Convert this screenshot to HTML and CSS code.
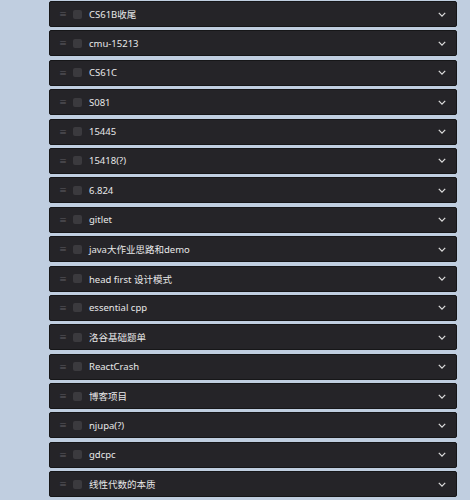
FILE: index.html
```html
<!DOCTYPE html>
<html lang="en">
<head>
    <meta charset="UTF-8">
    <meta name="viewport" content="width=device-width, initial-scale=1.0">
    <title>Todo</title>
    <link rel="stylesheet" href="styles.css">
</head>
<body>
    <ul class="list">
        <li class="item"><span class="handle">≡</span><span class="check"></span><span class="title">CS61B收尾</span><svg class="chev" viewBox="0 0 10 6"><path d="M1 1l4 4 4-4"/></svg></li>
        <li class="item"><span class="handle">≡</span><span class="check"></span><span class="title">cmu-15213</span><svg class="chev" viewBox="0 0 10 6"><path d="M1 1l4 4 4-4"/></svg></li>
        <li class="item"><span class="handle">≡</span><span class="check"></span><span class="title">CS61C</span><svg class="chev" viewBox="0 0 10 6"><path d="M1 1l4 4 4-4"/></svg></li>
        <li class="item"><span class="handle">≡</span><span class="check"></span><span class="title">S081</span><svg class="chev" viewBox="0 0 10 6"><path d="M1 1l4 4 4-4"/></svg></li>
        <li class="item"><span class="handle">≡</span><span class="check"></span><span class="title">15445</span><svg class="chev" viewBox="0 0 10 6"><path d="M1 1l4 4 4-4"/></svg></li>
        <li class="item"><span class="handle">≡</span><span class="check"></span><span class="title">15418(?)</span><svg class="chev" viewBox="0 0 10 6"><path d="M1 1l4 4 4-4"/></svg></li>
        <li class="item"><span class="handle">≡</span><span class="check"></span><span class="title">6.824</span><svg class="chev" viewBox="0 0 10 6"><path d="M1 1l4 4 4-4"/></svg></li>
        <li class="item"><span class="handle">≡</span><span class="check"></span><span class="title">gitlet</span><svg class="chev" viewBox="0 0 10 6"><path d="M1 1l4 4 4-4"/></svg></li>
        <li class="item"><span class="handle">≡</span><span class="check"></span><span class="title">java大作业思路和demo</span><svg class="chev" viewBox="0 0 10 6"><path d="M1 1l4 4 4-4"/></svg></li>
        <li class="item"><span class="handle">≡</span><span class="check"></span><span class="title">head first 设计模式</span><svg class="chev" viewBox="0 0 10 6"><path d="M1 1l4 4 4-4"/></svg></li>
        <li class="item"><span class="handle">≡</span><span class="check"></span><span class="title">essential cpp</span><svg class="chev" viewBox="0 0 10 6"><path d="M1 1l4 4 4-4"/></svg></li>
        <li class="item"><span class="handle">≡</span><span class="check"></span><span class="title">洛谷基础题单</span><svg class="chev" viewBox="0 0 10 6"><path d="M1 1l4 4 4-4"/></svg></li>
        <li class="item"><span class="handle">≡</span><span class="check"></span><span class="title">ReactCrash</span><svg class="chev" viewBox="0 0 10 6"><path d="M1 1l4 4 4-4"/></svg></li>
        <li class="item"><span class="handle">≡</span><span class="check"></span><span class="title">博客项目</span><svg class="chev" viewBox="0 0 10 6"><path d="M1 1l4 4 4-4"/></svg></li>
        <li class="item"><span class="handle">≡</span><span class="check"></span><span class="title">njupa(?)</span><svg class="chev" viewBox="0 0 10 6"><path d="M1 1l4 4 4-4"/></svg></li>
        <li class="item"><span class="handle">≡</span><span class="check"></span><span class="title">gdcpc</span><svg class="chev" viewBox="0 0 10 6"><path d="M1 1l4 4 4-4"/></svg></li>
        <li class="item"><span class="handle">≡</span><span class="check"></span><span class="title">线性代数的本质</span><svg class="chev" viewBox="0 0 10 6"><path d="M1 1l4 4 4-4"/></svg></li>
    </ul>
</body>
</html>
```

FILE: styles.css
```css
body {
    margin: 0;
    background: #c0cee0;
    font-family: "Noto Sans", "Noto Sans CJK SC", sans-serif;
    height: 500px;
    overflow: hidden;
}

.list {
    list-style: none;
    margin: 0;
    padding: 1px 0 0 49px;
    width: 408px;
    display: flex;
    flex-direction: column;
    gap: 3.4px;
}

.item {
    display: flex;
    align-items: center;
    height: 24px;
    background: #252428;
    border: 1px solid #161618;
    border-radius: 2px;
    padding: 0 0 0 9px;
    color: #e8e8e8;
    font-size: 9.5px;
}

.handle {
    width: 10px;
    color: #5f5e63;
    font-size: 8px;
    line-height: 1;
}

.check {
    width: 9px;
    height: 9px;
    margin-left: 4px;
    border-radius: 2px;
    background: #3b3a3e;
}

.title {
    margin-left: 7px;
    flex: 1;
}

.chev {
    width: 8px;
    height: 5px;
    margin-right: 10px;
    fill: none;
    stroke: #dcdcdc;
    stroke-width: 1.6;
}
```
